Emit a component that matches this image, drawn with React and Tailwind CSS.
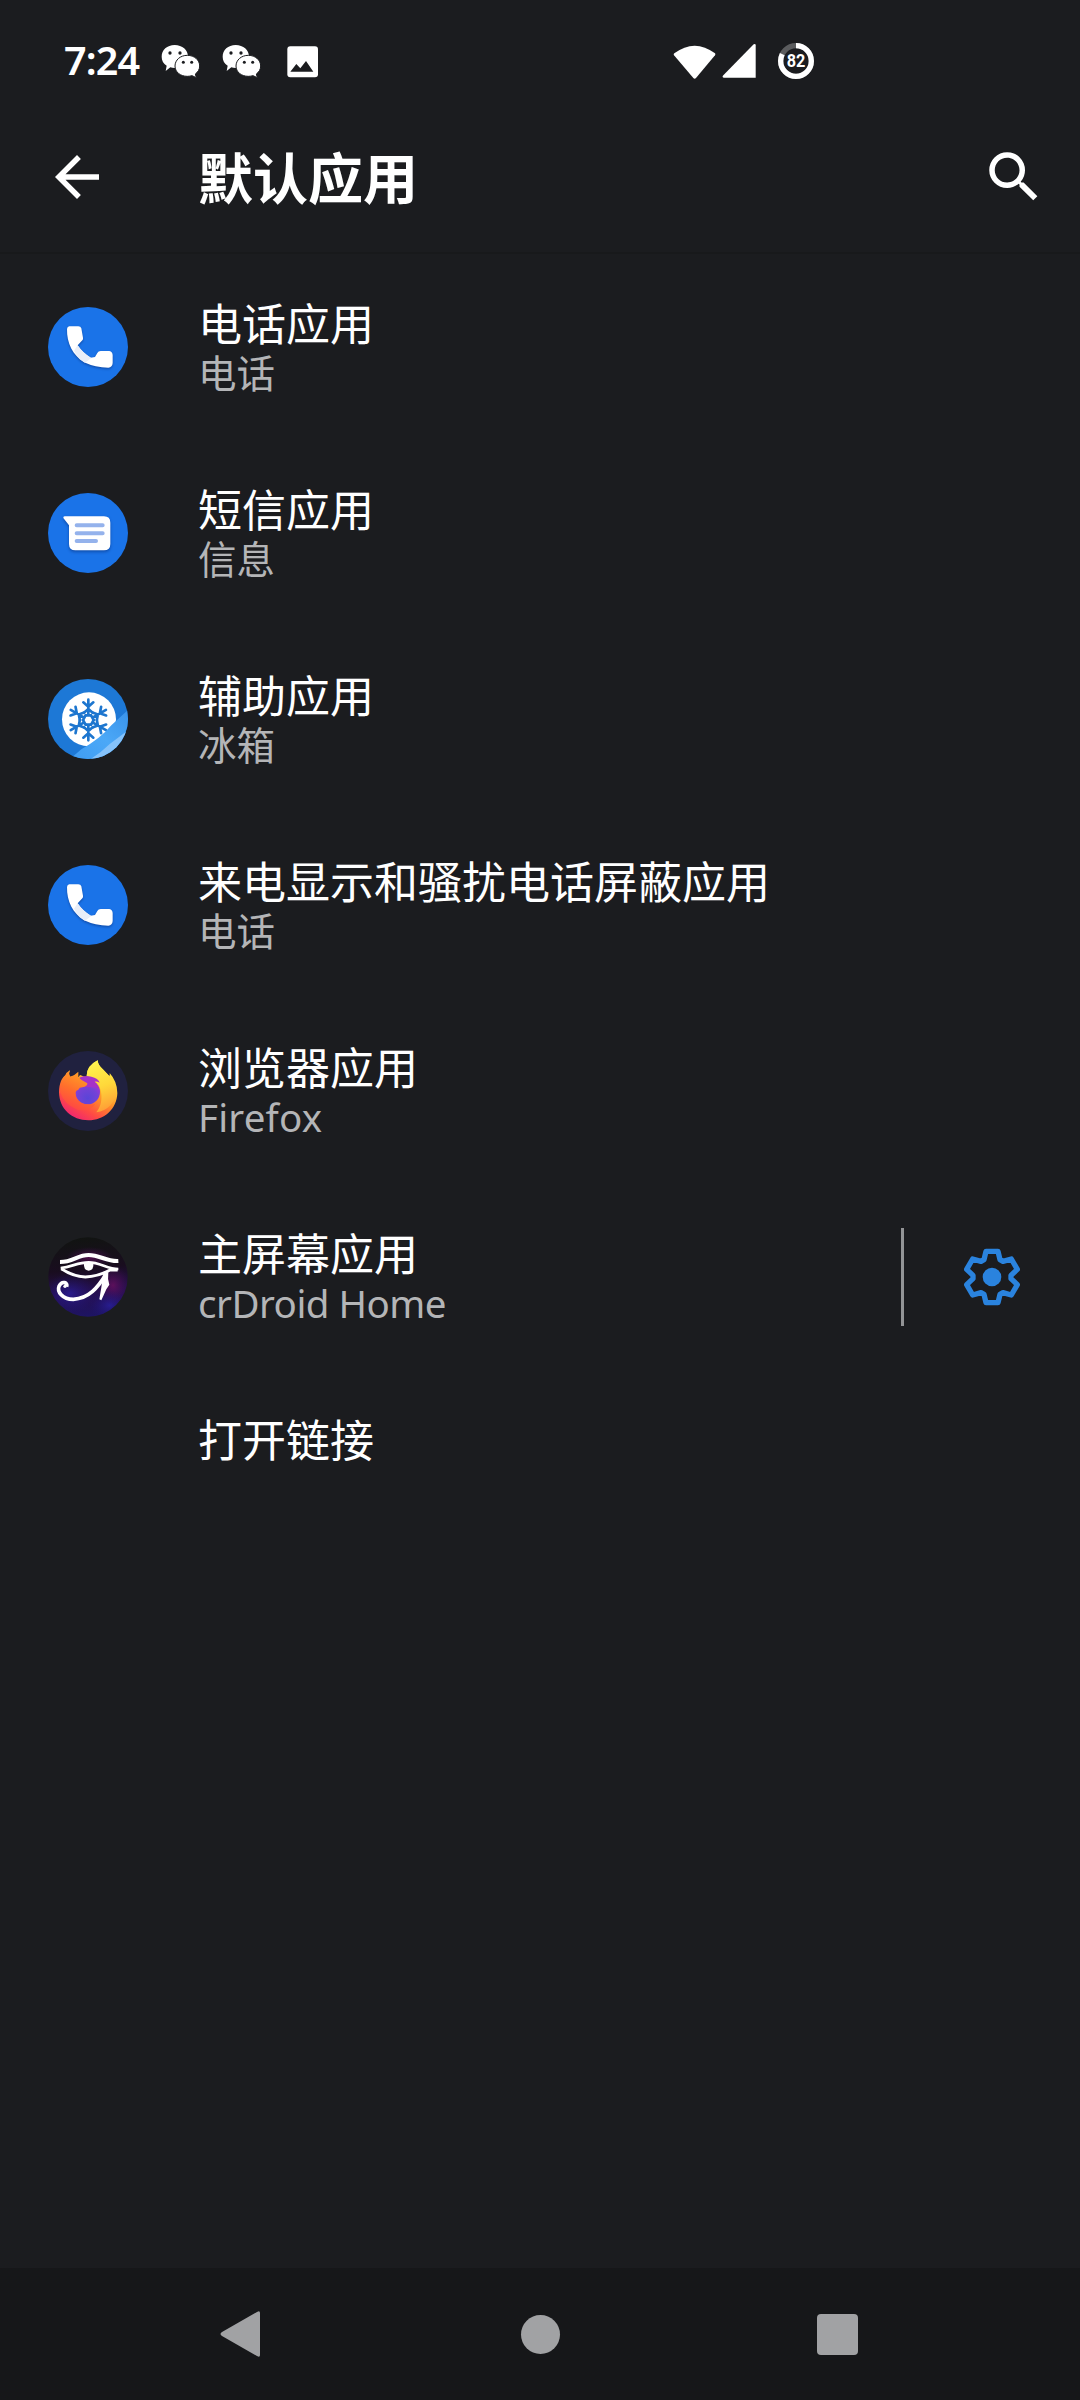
import React from "react";

function WeChat() {
  return (
    <svg className="h-[36px] w-[42px] shrink-0" viewBox="0 0 126 108">
      <path d="M50 6c23 0 40 15 40 35S73 75 50 75c-5 0-9-1-13-2L23 84l3-16C16 62 11 52 11 41 11 21 27 6 50 6Z" fill="#fff" />
      <path d="M88 37c21 0 37 14 37 32 0 10-5 18-13 24l3 11-13-6c-4 1-9 2-14 2-21 0-37-13-37-31s16-32 37-32Z" fill="#fff" stroke="#1b1c1f" strokeWidth="3" />
      <g fill="#1b1c1f">
        <circle cx="36" cy="30" r="5" />
        <circle cx="66" cy="30" r="5" />
        <circle cx="76" cy="58" r="4.5" />
        <circle cx="101" cy="58" r="4.5" />
      </g>
    </svg>
  );
}

function StatusBar() {
  return (
    <div className="flex h-[100px] items-center pt-[22px] pl-[64px]">
      <span className="w-[94px] text-[39.5px] leading-none font-semibold tracking-[-0.9px] text-white">7:24</span>
      <div className="flex items-center gap-[19px]">
        <WeChat />
        <WeChat />
      </div>
      <svg className="ml-[25px] h-[33px] w-[33px]" viewBox="0 0 99 99">
        <rect x="4" y="4" width="92" height="93" rx="9" fill="#fff" />
        <path d="M13 80 31 57 43 70 60 48 82 80Z" fill="#1b1c1f" />
      </svg>
      <svg className="ml-[354px] h-[36px] w-[43px]" viewBox="0 0 129 108">
        <path d="M4 31Q65-15 126 31 128 34 126 37L69 105Q65 109 61 105L3 37Q1 34 4 31Z" fill="#fff" />
      </svg>
      <svg className="ml-[6px] h-[36px] w-[34px]" viewBox="0 0 102 108">
        <path d="M95 4Q101 1 101 7V104H5Q-1 103 4 97Z" fill="#fff" />
      </svg>
      <svg className="ml-[21px] h-[38px] w-[38px]" viewBox="0 0 114 114">
        <circle cx="57" cy="57" r="46" fill="none" stroke="#5b5c5e" strokeWidth="16" />
        <circle cx="57" cy="57" r="46" fill="none" stroke="#fff" strokeWidth="16" pathLength="100" strokeDasharray="82 18" transform="rotate(-90 57 57)" />
        <text x="57" y="76" textAnchor="middle" fontSize="54" fontWeight="700" fill="#fff" fontFamily="Roboto, sans-serif" textLength="56" lengthAdjust="spacingAndGlyphs">82</text>
      </svg>
    </div>
  );
}

function Header() {
  return (
    <header className="flex h-[154px] items-center border-b-2 border-[#18191b] pt-[2px] pr-[33px] pl-[44px]">
      <svg className="h-[66px] w-[66px]" viewBox="0 0 24 24" fill="#fff">
        <path d="M20 11H7.83l5.59-5.59L12 4l-8 8 8 8 1.41-1.41L7.83 13H20v-2z" />
      </svg>
      <h1 className="ml-[88px] flex-1 text-[55px] leading-none font-bold text-white">默认应用</h1>
      <svg className="h-[66px] w-[66px]" viewBox="0 0 24 24" fill="#fff">
        <path d="M15.5 14h-.79l-.28-.27A6.47 6.47 0 0 0 16 9.5 6.5 6.5 0 1 0 9.5 16c1.61 0 3.09-.59 4.23-1.57l.27.28v.79l5 4.99L20.49 19l-4.99-5zm-6 0C7.01 14 5 11.99 5 9.5S7.01 5 9.5 5 14 7.01 14 9.5 11.99 14 9.5 14z" />
      </svg>
    </header>
  );
}

function PhoneIcon() {
  return (
    <svg className="h-[80px] w-[80px]" viewBox="0 0 240 240">
      <circle cx="120" cy="120" r="120" fill="#1a73e8" />
      <path
        d="M64 58H91Q98 58 100 64L105 92Q106 97 103 100L89 115Q104 138 128 152L141 150 148 138Q151 132 158 132H184Q194 134 194 145V168Q193 181 181 182 142 182 108 166C75 144 56 110 57 66Q58 58 64 58Z"
        fill="#fff"
        className="drop-shadow-[0_4px_3px_rgba(0,20,80,0.4)]"
      />
      <path d="M89 115Q104 138 130 153L111 167Q89 153 78 131Z" fill="#e9eef8" />
    </svg>
  );
}

function MessagesIcon() {
  return (
    <svg className="h-[80px] w-[80px]" viewBox="0 0 240 240">
      <circle cx="120" cy="120" r="120" fill="#1a73e8" />
      <path
        d="M50 70H168Q187 70 187 89V153Q187 172 168 172H82Q63 172 63 153V97L46 75Q45 70 50 70Z"
        fill="#fff"
        className="drop-shadow-[0_5px_4px_rgba(0,20,80,0.4)]"
      />
      <g stroke="#94b2ec" strokeWidth="12" strokeLinecap="round">
        <path d="M86 97H164M86 121H164M86 144H144" />
      </g>
    </svg>
  );
}

function FridgeIcon() {
  const arms = [0, 60, 120, 180, 240, 300];
  return (
    <svg className="h-[80px] w-[80px]" viewBox="0 0 240 240">
      <defs>
        <clipPath id="fridge-clip"><circle cx="120" cy="120" r="120" /></clipPath>
        <linearGradient id="fridge-fold" x1="0" y1="1" x2="1" y2="0">
          <stop offset="0" stopColor="#3f9cf3" />
          <stop offset="0.5" stopColor="#4ba8f7" />
          <stop offset="1" stopColor="#3a93ea" />
        </linearGradient>
      </defs>
      <g clipPath="url(#fridge-clip)">
        <rect width="240" height="240" fill="#1d78d6" />
        <circle cx="123" cy="121" r="81" fill="#fff" />
        <g transform="translate(121 123)" fill="none" stroke="#1d76cf" strokeWidth="8" strokeLinecap="round" strokeLinejoin="round">
          {arms.map((a) => (
            <g key={a} transform={`rotate(${a})`}>
              <path d="M0-16V-61M-15-53 0-40 15-53M-13-22 0-33 13-22M-8-14H8" />
            </g>
          ))}
        </g>
        <path d="M66 240 100 211Q158 178 190 139L240 93V240Z" fill="url(#fridge-fold)" />
        <path d="M122 244Q160 220 186 194L242 152V244Z" fill="#85c2fa" />
      </g>
    </svg>
  );
}

function FirefoxIcon() {
  return (
    <svg className="h-[80px] w-[80px]" viewBox="0 0 240 240">
      <defs>
        <linearGradient id="ff-body" x1="0.8" y1="0.05" x2="0.25" y2="0.95">
          <stop offset="0" stopColor="#fff14a" />
          <stop offset="0.3" stopColor="#ffc832" />
          <stop offset="0.55" stopColor="#ff8a2a" />
          <stop offset="0.8" stopColor="#ff4a44" />
          <stop offset="1" stopColor="#f0286e" />
        </linearGradient>
        <linearGradient id="ff-tail" x1="0.4" y1="0" x2="0.6" y2="1">
          <stop offset="0" stopColor="#fff44f" />
          <stop offset="0.5" stopColor="#ffd83a" />
          <stop offset="1" stopColor="#ff9a36" />
        </linearGradient>
        <linearGradient id="ff-head" x1="0.2" y1="1" x2="0.6" y2="0">
          <stop offset="0" stopColor="#ff3f48" />
          <stop offset="0.5" stopColor="#ff6f2c" />
          <stop offset="1" stopColor="#ffa526" />
        </linearGradient>
        <radialGradient id="ff-globe" cx="0.5" cy="0.75" r="0.8">
          <stop offset="0" stopColor="#5a45d8" />
          <stop offset="0.5" stopColor="#7442d6" />
          <stop offset="1" stopColor="#b833d0" />
        </radialGradient>
      </defs>
      <circle cx="120" cy="120" r="120" fill="#20213f" />
      <path d="M66 58Q60 70 67 77 80 73 92 78L96 72Q120 82 116 74 118 44 149 28 150 44 166 56L184 76Q186 70 185 66 208 92 208 126C207 174 168 208 121 208 72 208 34 174 33 124 33 98 42 80 52 73 55 64 66 58Z" fill="url(#ff-body)" />
      <path d="M116 74Q116 44 149 28 150 44 166 56L182 73Q205 96 205 125C202 152 179 180 145 184 168 158 164 110 144 94Z" fill="url(#ff-tail)" />
      <circle cx="119" cy="123" r="37" fill="url(#ff-globe)" />
      <path d="M94 80Q110 72 130 77 151 82 155 95 146 90 140 92L152 111 98 106Z" fill="#a632c8" />
      <path d="M66 58Q60 70 67 77 80 73 91 62L91 79Q99 88 118 97 119 106 103 109 94 109 91 116 84 117 82 125 82 154 113 160 128 163 142 158 128 184 88 176 48 160 37 124 34 90 52 73 55 64 66 58Z" fill="url(#ff-head)" />
    </svg>
  );
}

function HorusIcon() {
  return (
    <svg className="h-[80px] w-[80px]" viewBox="0 0 240 240">
      <defs>
        <clipPath id="horus-clip"><circle cx="120" cy="120" r="119" /></clipPath>
        <linearGradient id="horus-sky" x1="0.4" y1="0" x2="0.5" y2="1">
          <stop offset="0" stopColor="#111411" />
          <stop offset="0.4" stopColor="#190d1f" />
          <stop offset="0.7" stopColor="#260f50" />
          <stop offset="1" stopColor="#1d1463" />
        </linearGradient>
        <radialGradient id="horus-pink">
          <stop offset="0" stopColor="#6a1060" />
          <stop offset="1" stopColor="#4a0d60" stopOpacity="0" />
        </radialGradient>
        <radialGradient id="horus-blue">
          <stop offset="0" stopColor="#2a20a0" stopOpacity="0.75" />
          <stop offset="1" stopColor="#20147a" stopOpacity="0" />
        </radialGradient>
      </defs>
      <g clipPath="url(#horus-clip)">
        <rect width="240" height="240" fill="url(#horus-sky)" />
        <ellipse cx="125" cy="62" rx="70" ry="32" fill="url(#horus-pink)" opacity="0.7" />
        <ellipse cx="195" cy="145" rx="50" ry="60" fill="url(#horus-pink)" opacity="0.8" />
        <ellipse cx="65" cy="170" rx="80" ry="60" fill="url(#horus-blue)" />
        <ellipse cx="185" cy="205" rx="60" ry="45" fill="url(#horus-blue)" />
      </g>
      <g fill="none" stroke="#fff" strokeWidth="9" strokeLinejoin="round">
        <path d="M36 75C75 75 88 54 122 54S175 74 211 72" strokeWidth="12" />
        <path d="M38 93C72 90 88 76 122 76S178 96 211 96" strokeWidth="8" />
        <path d="M40 95Q76 119 112 120 150 119 186 99L209 99" />
        <path d="M174 112C150 151 123 185 76 187 42 187 27 163 33 148 42 129 61 137 56 149" strokeWidth="11" />
        <circle cx="51" cy="148" r="5" fill="#fff" stroke="none" />
      </g>
      <path d="M108 78Q106 100 122 101 138 100 136 78Z" fill="#fff" />
      <path d="M165 112 181 104Q178 125 184 143L175 157 160 190 154 187Q161 151 165 112Z" fill="#fff" />
    </svg>
  );
}

function Gear() {
  return (
    <svg className="h-[60px] w-[60px]" viewBox="-90 -90 180 180">
      <path
        d="M-18-77H18L24-52 33-47 58-54 76-23 57-5V5L76 23 58 54 33 47 24 52 18 77H-18L-24 52-33 47-58 54-76 23-57 5V-5L-76-23-58-54-33-47-24-52Z"
        fill="none"
        stroke="#2a83de"
        strokeWidth="16"
        strokeLinejoin="round"
      />
      <circle r="28" fill="#2a83de" />
    </svg>
  );
}

const rows = [
  { title: "电话应用", sub: "电话", Icon: PhoneIcon },
  { title: "短信应用", sub: "信息", Icon: MessagesIcon },
  { title: "辅助应用", sub: "冰箱", Icon: FridgeIcon },
  { title: "来电显示和骚扰电话屏蔽应用", sub: "电话", Icon: PhoneIcon },
  { title: "浏览器应用", sub: "Firefox", Icon: FirefoxIcon, subClass: "tracking-[0.2px]" },
  { title: "主屏幕应用", sub: "crDroid Home", Icon: HorusIcon, subClass: "tracking-[-0.5px]", settings: true },
];

function Row({ title, sub, Icon, subClass = "", settings }) {
  return (
    <li className="flex h-[186px] items-center pl-[48px]">
      <Icon />
      <div className="ml-[70px] flex-1 pb-[1px]">
        <div className="text-[44px] leading-[54px] text-white">{title}</div>
        <div className={`text-[38.5px] leading-[45px] text-[#b4b5b7] ${subClass}`}>{sub}</div>
      </div>
      {settings && (
        <div className="flex h-[98px] w-[179px] items-center border-l-3 border-[#939496] pl-[58px]">
          <Gear />
        </div>
      )}
    </li>
  );
}

function NavBar() {
  return (
    <nav className="flex h-[132px] items-center bg-[#161719] pl-[219px]">
      <svg className="h-[48px] w-[42px]" viewBox="0 0 42 48">
        <path d="M38 2Q41 0 41 3V45Q41 48 38 46L3 26Q0 24 3 22Z" fill="#a1a2a4" />
      </svg>
      <div className="ml-[260px] h-[39px] w-[39px] rounded-full bg-[#a1a2a4]" />
      <div className="ml-[257px] h-[41px] w-[41px] rounded-[4px] bg-[#a1a2a4]" />
    </nav>
  );
}

export default function App() {
  return (
    <div className="flex h-[2400px] w-[1080px] flex-col overflow-hidden bg-[#1b1c1f] font-['Noto_Sans','Noto_Sans_CJK_SC',sans-serif]">
      <StatusBar />
      <Header />
      <ul className="flex-1">
        {rows.map((r) => (
          <Row key={r.title} {...r} />
        ))}
        <li className="flex h-[143px] items-center pb-[4px] pl-[198px] text-[44px] leading-[54px] text-white">打开链接</li>
      </ul>
      <NavBar />
    </div>
  );
}
